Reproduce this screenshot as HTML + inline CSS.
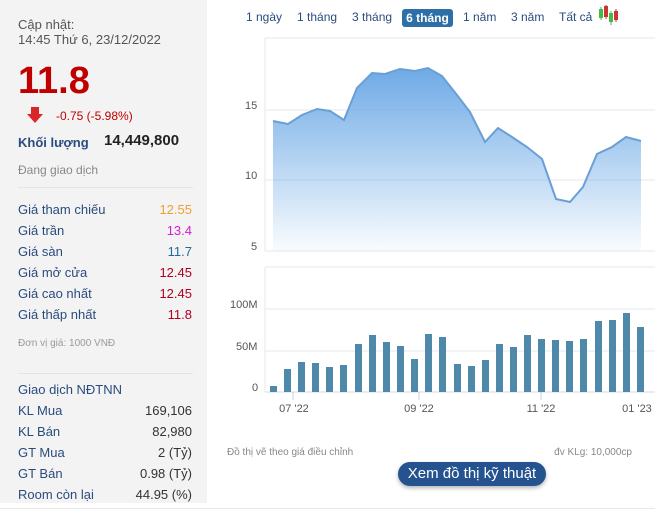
<!DOCTYPE html>
<html><head><meta charset="utf-8"><style>
body{margin:0;width:659px;height:514px;background:#fff;font-family:"Liberation Sans",Arial,sans-serif;position:relative;overflow:hidden}
.lp{position:absolute;left:0;top:0;width:207px;height:503px;background:#f3f3f3}
.a{position:absolute;white-space:nowrap}
.lb{color:#2a4c7d;font-size:13px;left:18px}
.v{font-size:13px;right:15px}
.r{position:absolute;left:0;width:207px;height:18px}
.tab{position:absolute;top:10px;font-size:12px;color:#2a4c7d}
</style></head><body>
<div class="lp">
<div class="a" style="left:18px;top:17px;font-size:13px;color:#555;line-height:15px">Cập nhật:<br>14:45 Thứ 6, 23/12/2022</div>
<div class="a" style="left:18px;top:61px;font-size:38px;font-weight:bold;color:#c00000;line-height:40px">11.8</div>
<svg class="a" style="left:27px;top:107px" width="16" height="17"><path d="M4 0h8v7h4L8 16 0 7h4z" fill="#d9262a"/></svg>
<div class="a" style="left:56px;top:109px;font-size:12px;color:#c00000">-0.75 (-5.98%)</div>
<div class="a" style="left:18px;top:135px;font-size:13px;font-weight:bold;color:#2a4c7d">Khối lượng</div>
<div class="a" style="left:104px;top:132px;font-size:15px;font-weight:bold;color:#222">14,449,800</div>
<div class="a" style="left:18px;top:163px;font-size:12px;color:#888">Đang giao dịch</div>
<div class="a" style="left:18px;top:187px;width:175px;border-top:1px solid #e4e4e4"></div>
<div class="a lb" style="top:202px">Giá tham chiếu</div><div class="a v" style="top:202px;color:#f0a030">12.55</div>
<div class="a lb" style="top:223px">Giá trần</div><div class="a v" style="top:223px;color:#d020d0">13.4</div>
<div class="a lb" style="top:244px">Giá sàn</div><div class="a v" style="top:244px;color:#1f6b95">11.7</div>
<div class="a lb" style="top:265px">Giá mở cửa</div><div class="a v" style="top:265px;color:#b00020">12.45</div>
<div class="a lb" style="top:286px">Giá cao nhất</div><div class="a v" style="top:286px;color:#b00020">12.45</div>
<div class="a lb" style="top:307px">Giá thấp nhất</div><div class="a v" style="top:307px;color:#b00020">11.8</div>
<div class="a" style="left:18px;top:338px;font-size:10px;color:#999">Đơn vị giá: 1000 VNĐ</div>
<div class="a" style="left:18px;top:373px;width:175px;border-top:1px solid #e4e4e4"></div>
<div class="a lb" style="top:382px">Giao dịch NĐTNN</div>
<div class="a lb" style="top:403px">KL Mua</div><div class="a v" style="top:403px;color:#333">169,106</div>
<div class="a lb" style="top:424px">KL Bán</div><div class="a v" style="top:424px;color:#333">82,980</div>
<div class="a lb" style="top:445px">GT Mua</div><div class="a v" style="top:445px;color:#333">2 (Tỷ)</div>
<div class="a lb" style="top:466px">GT Bán</div><div class="a v" style="top:466px;color:#333">0.98 (Tỷ)</div>
<div class="a lb" style="top:487px">Room còn lại</div><div class="a v" style="top:487px;color:#333">44.95 (%)</div>
</div>
<div class="a" style="left:0;top:508px;width:655px;border-top:1px solid #e8e8e8"></div>

<div class="tab" style="left:246px">1 ngày</div>
<div class="tab" style="left:297px">1 tháng</div>
<div class="tab" style="left:352px">3 tháng</div>
<div class="tab" style="left:402px;top:9px;width:51px;height:18px;background:#2f6fa7;color:#fff;border-radius:3px;text-align:center;line-height:18px;font-weight:bold">6 tháng</div>
<div class="tab" style="left:463px">1 năm</div>
<div class="tab" style="left:511px">3 năm</div>
<div class="tab" style="left:559px">Tất cả</div>
<svg class="a" style="left:598px;top:4px" width="24" height="22">
<line x1="3" y1="3" x2="3" y2="16" stroke="#3a8" /><rect x="1" y="5" width="4" height="9" fill="#4b4"/>
<line x1="8" y1="1" x2="8" y2="15" stroke="#b33"/><rect x="6" y="2" width="4" height="11" fill="#c33"/>
<line x1="13" y1="7" x2="13" y2="21" stroke="#3a8"/><rect x="11" y="9" width="4" height="9" fill="#4b4"/>
<line x1="18" y1="5" x2="18" y2="18" stroke="#b33"/><rect x="16" y="7" width="4" height="9" fill="#c33"/>
</svg>

<svg class="a" style="left:0;top:0" width="659" height="514" font-family="Liberation Sans, sans-serif">
<defs><linearGradient id="g" x1="0" y1="0" x2="0" y2="1"><stop offset="0" stop-color="#6eaae6"/><stop offset="1" stop-color="#6eaae6" stop-opacity="0.04"/></linearGradient></defs>
<line x1="265" y1="38" x2="655" y2="38" stroke="#e3e8ee"/>
<line x1="265" y1="38" x2="265" y2="251" stroke="#e3e8ee"/>
<line x1="265" y1="110" x2="655" y2="110" stroke="#e3e8ee"/>
<line x1="265" y1="180" x2="655" y2="180" stroke="#e3e8ee"/>
<line x1="265" y1="251" x2="655" y2="251" stroke="#e3e8ee"/>
<text x="245" y="109" font-size="11" fill="#555">15</text>
<text x="245" y="179" font-size="11" fill="#555">10</text>
<text x="251" y="250" font-size="11" fill="#555">5</text>
<path d="M273 121L288 124L302 115L317 109L330 111L344 120L357 88L372 73L385 74L400 69L415 71L428 68L442 76L457 95L470 112L485 142L498 128L512 137L527 147L542 159L556 199L570 202L583 187L597 154L612 147L626 137L641 141L641 251L273 251Z" fill="url(#g)"/>
<path d="M273 121L288 124L302 115L317 109L330 111L344 120L357 88L372 73L385 74L400 69L415 71L428 68L442 76L457 95L470 112L485 142L498 128L512 137L527 147L542 159L556 199L570 202L583 187L597 154L612 147L626 137L641 141" fill="none" stroke="#6a9fd6" stroke-width="2"/>

<line x1="265" y1="267" x2="655" y2="267" stroke="#e3e8ee"/>
<line x1="265" y1="267" x2="265" y2="392" stroke="#e3e8ee"/>
<line x1="265" y1="309" x2="655" y2="309" stroke="#e3e8ee"/>
<line x1="265" y1="351" x2="655" y2="351" stroke="#e3e8ee"/>
<line x1="265" y1="392" x2="655" y2="392" stroke="#d0d8e0"/>
<text x="230" y="308" font-size="11" fill="#555">100M</text>
<text x="236" y="350" font-size="11" fill="#555">50M</text>
<text x="252" y="391" font-size="11" fill="#555">0</text>
<g fill="#4f89aa">
<rect x="270" y="386" width="7" height="6"/><rect x="284" y="369" width="7" height="23"/><rect x="298" y="362" width="7" height="30"/><rect x="312" y="363" width="7" height="29"/><rect x="326" y="367" width="7" height="25"/><rect x="340" y="365" width="7" height="27"/><rect x="355" y="344" width="7" height="48"/><rect x="369" y="335" width="7" height="57"/><rect x="383" y="342" width="7" height="50"/><rect x="397" y="346" width="7" height="46"/><rect x="411" y="359" width="7" height="33"/><rect x="425" y="334" width="7" height="58"/><rect x="439" y="337" width="7" height="55"/><rect x="454" y="364" width="7" height="28"/><rect x="468" y="366" width="7" height="26"/><rect x="482" y="360" width="7" height="32"/><rect x="496" y="344" width="7" height="48"/><rect x="510" y="347" width="7" height="45"/><rect x="524" y="335" width="7" height="57"/><rect x="538" y="339" width="7" height="53"/><rect x="552" y="340" width="7" height="52"/><rect x="566" y="341" width="7" height="51"/><rect x="580" y="339" width="7" height="53"/><rect x="595" y="321" width="7" height="71"/><rect x="609" y="320" width="7" height="72"/><rect x="623" y="313" width="7" height="79"/><rect x="637" y="327" width="7" height="65"/>
</g>
<g stroke="#ccd" ><line x1="293" y1="392" x2="293" y2="400"/><line x1="419" y1="392" x2="419" y2="400"/><line x1="541" y1="392" x2="541" y2="400"/></g>
<g font-size="11" fill="#555" text-anchor="middle">
<text x="294" y="412">07 '22</text><text x="419" y="412">09 '22</text><text x="541" y="412">11 '22</text><text x="637" y="412">01 '23</text></g>
<text x="227" y="455" font-size="10" fill="#888">Đồ thị vẽ theo giá điều chỉnh</text>
<text x="632" y="455" font-size="10" fill="#888" text-anchor="end">đv KLg: 10,000cp</text>
</svg>
<div class="a" style="left:398px;top:462px;width:148px;height:24px;border-radius:12px;background:#245390;color:#fff;font-size:15px;line-height:24px;text-align:center;box-shadow:0 2px 4px rgba(0,0,0,.3)">Xem đồ thị kỹ thuật</div>
</body></html>
